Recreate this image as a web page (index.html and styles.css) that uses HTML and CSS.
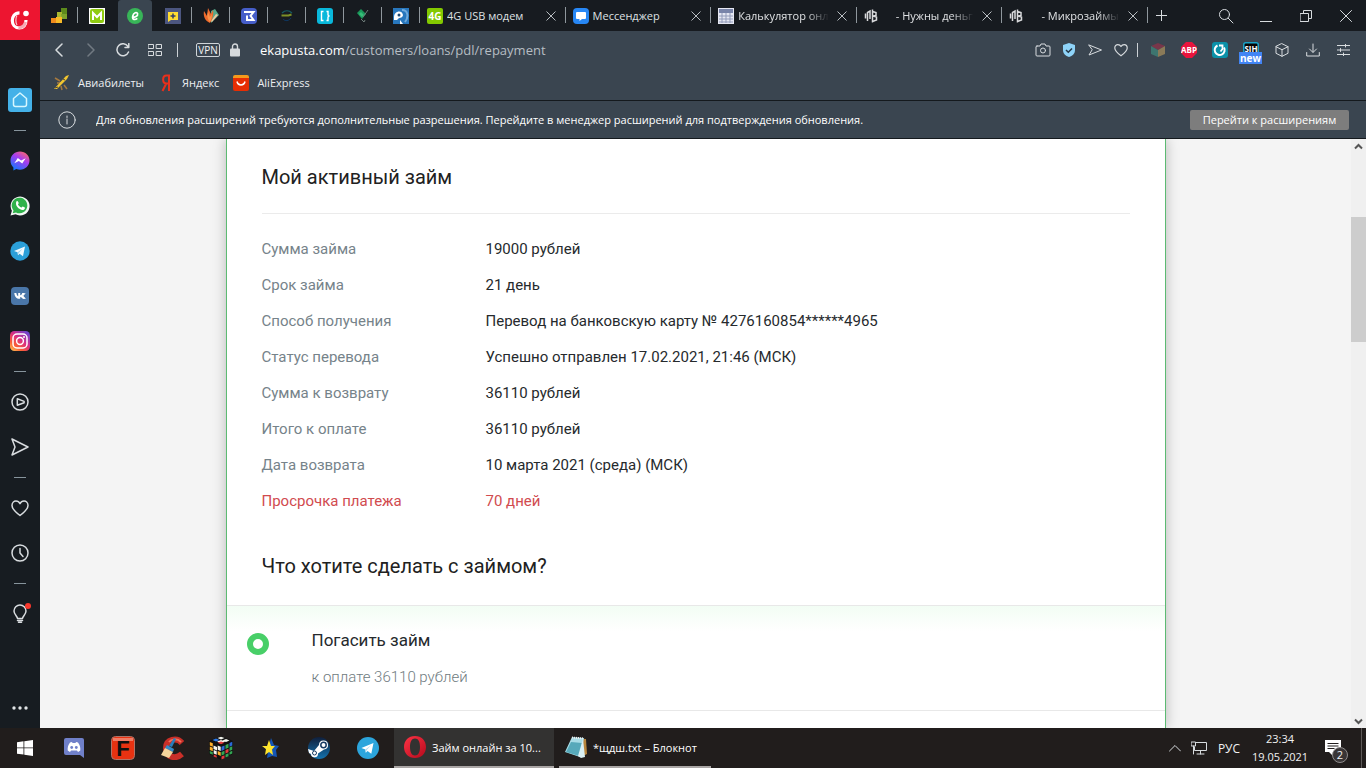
FILE: index.html
```html
<!DOCTYPE html>
<html lang="ru">
<head>
<meta charset="utf-8">
<meta name="viewport" content="width=device-width, initial-scale=1">
<title>Займ онлайн за 10 минут</title>
<link rel="stylesheet" href="styles.css">
</head>
<body>
<div class="desktop">
  <div class="browser">
    <nav class="sidebar" aria-label="Боковая панель">
      <button class="opera-menu" aria-label="Меню"><svg width="22" height="22" viewBox="0 0 22 22" fill="none"><path d="M10.500 3.800C5.500 3.800 3.300 7.500 3.300 11.500s2.600 7.500 7 7.500c4 0 6.700-3 6.700-8" stroke="#fff" stroke-width="3.200"/><path d="M9.500 18.500c3.500.5 6.500-2 7-5.500" stroke="#f6a9b4" stroke-width="3"/><path d="M8 6.500c-1.500 2-1.500 7.500 0 9.500" stroke="#f9ccd2" stroke-width="1.200"/><circle cx="17" cy="4.500" r="2.800" fill="#fff"/></svg></button>
      <div class="side-list">
        <button class="side-item" aria-label="Домой"><span class="home-box"><svg width="24" height="24" viewBox="0 0 24 24" fill="none" stroke="#d6f7ff" stroke-width="1.500" stroke-linejoin="round"><path d="M12 5l6.500 5.500v6a2 2 0 0 1-2 2h-9a2 2 0 0 1-2-2v-6z"/></svg></span></button>
        <span class="dash"></span>
        <button class="side-item" aria-label="Messenger"><svg width="20" height="20" viewBox="0 0 20 20"><defs><linearGradient id="ms" x1=".8" y1="0" x2=".2" y2="1"><stop offset="0" stop-color="#ff6968"/><stop offset=".4" stop-color="#a63cf0"/><stop offset="1" stop-color="#0a7cff"/></linearGradient></defs><path d="M10 .5C4.500.500.500 4.500.500 9.700c0 2.800 1.100 5.100 2.900 6.700v3.100l2.900-1.400c1.100.4 2.400.6 3.700.6 5.500 0 9.500-4 9.500-9.100S15.500.500 10 .5z" fill="url(#ms)"/><path d="M4.300 12.300l3.500-5.400 3.300 2.600 4.600-2.300-3.500 5.300-3.300-2.500z" fill="#fff"/></svg></button>
        <button class="side-item" aria-label="WhatsApp"><svg width="20" height="20" viewBox="0 0 20 20"><path d="M.5 19.500l1.400-4.700A9.500 9.500 0 1 1 5.500 18.300z" fill="#f3f7f4"/><path d="M2.700 17.300l.8-2.800A7.800 7.800 0 1 1 6 16.500z" fill="#2fb24a"/><path d="M6.500 5.300c1.200-1 1.700.4 2.200 1.700.2.600-.9 1.200-.7 1.600.8 1.500 1.800 2.400 3.300 3 .5.100 1-1.300 1.500-1.100l2 1c.7.500-.4 2.200-1.500 2.400-4 .5-9-4.500-6.800-8.600z" fill="#fff"/></svg></button>
        <button class="side-item" aria-label="Telegram"><svg width="20" height="20" viewBox="0 0 20 20"><circle cx="10" cy="10" r="9.700" fill="#2b9fd9"/><path d="M4 10l11-4.600-2 9.800-3.400-2.500-1.600 1.600-.4-3z" fill="#f2faff"/><path d="M7.600 11.300L13 7.200l-4.200 4.700-.8 2.400z" fill="#a9d6ee"/></svg></button>
        <button class="side-item" aria-label="ВКонтакте"><svg width="18" height="18" viewBox="0 0 18 18"><rect width="18" height="18" rx="4" fill="#4a76a8"/><path d="M3.300 6h2c.4 1.700 1 2.900 1.900 3.300V6h2v2.300C10.300 8 11 7 11.500 6h2c-.4 1.200-1.200 2.100-2 2.800 1 .5 1.800 1.500 2.500 3h-2.200c-.5-1-1.300-1.700-2.600-1.900v1.900H8.500C5.500 11.800 3.600 9.700 3.300 6z" fill="#fff"/><path d="M11 6.200h3.700l-2.500 2.700 2.800 2.900H12z" fill="#fff"/></svg></button>
        <button class="side-item" aria-label="Instagram"><svg width="20" height="20" viewBox="0 0 20 20" fill="none"><defs><linearGradient id="ig" x1="0" y1="1" x2=".8" y2="0"><stop offset="0" stop-color="#ffd35a"/><stop offset=".3" stop-color="#fa5e35"/><stop offset=".6" stop-color="#d92e83"/><stop offset="1" stop-color="#6b45d0"/></linearGradient></defs><rect width="20" height="20" rx="4.500" fill="url(#ig)"/><rect x="3" y="3" width="14" height="14" rx="4" stroke="#fff" stroke-width="1.500"/><circle cx="10" cy="10" r="3.400" stroke="#fff" stroke-width="1.500"/><circle cx="14" cy="6" r="1" fill="#fff"/></svg></button>
        <span class="dash"></span>
        <button class="side-item" aria-label="Плеер"><svg width="18" height="18" viewBox="0 0 18 18" class="line"><circle cx="9" cy="9" r="8"/><path d="M6.300 5.800v6.400l6.800-2.500v-1.300z"/></svg></button>
        <button class="side-item" aria-label="Моя лента"><svg width="18" height="18" viewBox="0 0 18 18" class="line"><path d="M1 1l16 8L1 17l3-8z"/></svg></button>
        <span class="dash"></span>
        <button class="side-item" aria-label="Закладки"><svg width="18" height="18" viewBox="0 0 18 18" class="line"><path d="M9 16.500C4 12.700 1 10 1 6.500 1 3.700 2.900 2 5 2c1.800 0 3.200 1 4 2.600C9.800 3 11.200 2 13 2c2.100 0 4 1.700 4 4.500 0 3.500-3 6.200-8 10z"/></svg></button>
        <button class="side-item" aria-label="История"><svg width="18" height="18" viewBox="0 0 18 18" class="line"><circle cx="9" cy="9" r="8"/><path d="M9 4.500V9l3 3.500"/></svg></button>
        <span class="dash"></span>
        <button class="side-item" aria-label="Советы"><svg width="20" height="22" viewBox="0 0 20 22" class="line"><path d="M7.500 15.500c0-2-3.500-4-3.500-7.500a6 6 0 0 1 12 0c0 3.500-3.500 5.500-3.500 7.500zM7.500 17.500h5M8.500 19.300h3"/></svg><span class="dot"></span></button>
      </div>
      <button class="side-more" aria-label="Ещё"><svg width="18" height="6" viewBox="0 0 18 6" fill="#e1e4e6"><circle cx="3" cy="3" r="1.700"/><circle cx="9" cy="3" r="1.700"/><circle cx="15" cy="3" r="1.700"/></svg></button>
    </nav>

    <div class="window">
      <div class="tabbar">
        <div class="pinned">
          <button class="pin" aria-label="Вкладка 1"><svg width="16" height="16" viewBox="0 0 16 16"><path d="M10 0h6v6h-6z" fill="#5c8a1c"/><path d="M6 4h5v6H6z" fill="#a9b82f"/><path d="M10 6h6v5h-5z" fill="#7ba32b"/><path d="M0 10h6v5H0z" fill="#f08b1d"/><path d="M5 9h6v6H5z" fill="#f8ba28"/></svg></button>
          <button class="pin last" aria-label="Вкладка 2"><svg width="16" height="16" viewBox="0 0 16 16"><path d="M0 0h16v16H0z" fill="#fff"/><rect x="1" y="1" width="14" height="14" rx="2" fill="#8fcb10"/><path d="M4 12V5l4 4 4-4v7" fill="none" stroke="#fff" stroke-width="2"/></svg></button>
          <button class="pin active" aria-label="еКапуста"><svg width="16" height="16" viewBox="0 0 16 16"><circle cx="8" cy="8" r="8" fill="#38b558"/><path d="M5 9.200c2.500.3 6.200-1.200 5.600-3.500C10 3.700 6.500 4.500 5.700 8.300c-.6 3.400 2.300 4 4.600 2" fill="none" stroke="#fff" stroke-width="1.700"/></svg></button>
          <button class="pin" aria-label="Вкладка 4"><svg width="16" height="16" viewBox="0 0 16 16"><path d="M0 0h16v16H0z" fill="#4c5680"/><path d="M3 4h10v8H6l-3 2z" fill="#ffdc32"/><path d="M8 5.500v5M5.500 8h5" stroke="#333e67" stroke-width="1.500"/></svg></button>
          <button class="pin" aria-label="Вкладка 5"><svg width="16" height="16" viewBox="0 0 16 16"><path d="M8 3l4-2 4 6-8 8z" fill="#57a98a"/><path d="M8 13l5-7 2 1-6 7z" fill="#f0c79d"/><path d="M7 15C2 13 0 8 1 3l3 5 1-8 3 6 2-4c1 5-1 10-3 13z" fill="#ee6a2c"/><path d="M7 14C4 11 4 7 5 4l2 5 2-3c0 3-1 6-2 8z" fill="#f7924a"/></svg></button>
          <button class="pin" aria-label="Вкладка 6"><svg width="16" height="16" viewBox="0 0 16 16" fill="none"><rect width="16" height="16" rx="4" fill="#465ec9"/><path d="M3 4h9.500L9.500 7.800l3 4.200H6V7.500" stroke="#fff" stroke-width="2"/></svg></button>
          <button class="pin" aria-label="Вкладка 7"><svg width="16" height="16" viewBox="0 0 16 16" fill="none"><path d="M3 5c3-3 7-3 10 0" stroke="#155c64" stroke-width="1.200"/><path d="M2.500 7.500h7l3-1" stroke="#7d9027" stroke-width="2"/><path d="M4 11c2 2.500 6 2 8-1" stroke="#0e3760"/></svg></button>
          <button class="pin" aria-label="Вкладка 8"><svg width="16" height="16" viewBox="0 0 16 16" fill="none"><rect width="16" height="16" rx="3" fill="#09b8db"/><path d="M6.500 3.500h-2v9h2M9.500 3.500h1.500V7l1 1-1 1v3.500H9.500" stroke="#fff" stroke-width="1.400"/></svg></button>
          <button class="pin" aria-label="Вкладка 9"><svg width="16" height="16" viewBox="0 0 16 16"><path d="M2 5l4-4 5 5-4 5z" fill="#1a985a"/><path d="M4 6l2-2 3 3-2 2z" fill="#35bd78"/><path d="M8 9l5-7M6 11l3 3 1-2" fill="none" stroke="#6e7d7a"/></svg></button>
          <button class="pin" aria-label="Вкладка 10"><svg width="16" height="16" viewBox="0 0 16 16"><path d="M0 0h16v16H0z" fill="#2877bd"/><path d="M1 9c0-6 8-8 9-2 0 2-2 3-4 3l-2 2H1zM7 12l3 4H7z" fill="#fff"/><circle cx="6" cy="7" r="1.500" fill="#204b75"/><path d="M9 2c6 0 7 7 3 12" stroke="#6fa9da" stroke-width="2" fill="none"/></svg></button>
        </div>
        <div class="tabs">
          <div class="tab"><svg width="16" height="16" viewBox="0 0 16 16"><rect width="16" height="16" rx="2" fill="#83c900"/><text x="8" y="12" class="glyph-4g" text-anchor="middle">4G</text></svg><button class="tab-title">4G USB модем</button><button class="close" aria-label="Закрыть"><svg width="10" height="10" viewBox="0 0 10 10"><path d="M.5.5l9 9m0-9l-9 9"/></svg></button></div>
          <div class="tab"><svg width="16" height="16" viewBox="0 0 16 16"><rect width="16" height="16" rx="4" fill="#2787f5"/><path d="M4 4h8q1 0 1 1v5q0 1-1 1H9l-2.500 2V11H4q-1 0-1-1V5q0-1 1-1z" fill="#fff"/></svg><button class="tab-title">Мессенджер</button><button class="close" aria-label="Закрыть"><svg width="10" height="10" viewBox="0 0 10 10"><path d="M.5.5l9 9m0-9l-9 9"/></svg></button></div>
          <div class="tab"><svg width="16" height="16" viewBox="0 0 16 16"><path d="M0 0h16v16H0z" fill="#e6e8f3"/><path d="M1 1h14v4H1z" fill="#7984a9"/><path d="M1 8h14M1 11h14M1 14h14M4 5v10M8 5v10M12 5v10" stroke="#929bb9"/></svg><button class="tab-title fade">Калькулятор онл</button><button class="close" aria-label="Закрыть"><svg width="10" height="10" viewBox="0 0 10 10"><path d="M.5.5l9 9m0-9l-9 9"/></svg></button></div>
          <div class="tab"><svg width="16" height="16" viewBox="0 0 16 16" fill="none" stroke="#d9dadc" stroke-width="1.500"><path d="M3.500 13V4.500l2.500-1.500v8M1.500 5.500v5M8.500 1.500v13M8.500 3.500l3.500 1v3l-3 .5 3.500 1v3l-4 1.500"/></svg><button class="tab-title fade indent">- Нужны деньг</button><button class="close" aria-label="Закрыть"><svg width="10" height="10" viewBox="0 0 10 10"><path d="M.5.5l9 9m0-9l-9 9"/></svg></button></div>
          <div class="tab"><svg width="16" height="16" viewBox="0 0 16 16" fill="none" stroke="#d9dadc" stroke-width="1.500"><path d="M3.500 13V4.500l2.500-1.500v8M1.500 5.500v5M8.500 1.500v13M8.500 3.500l3.500 1v3l-3 .5 3.500 1v3l-4 1.500"/></svg><button class="tab-title fade indent">- Микрозаймы</button><button class="close" aria-label="Закрыть"><svg width="10" height="10" viewBox="0 0 10 10"><path d="M.5.5l9 9m0-9l-9 9"/></svg></button></div>
        </div>
        <button class="new-tab" aria-label="Новая вкладка"><svg width="11" height="11" viewBox="0 0 11 11" class="line thin"><path d="M5.500 0v11M0 5.500h11"/></svg></button>
        <div class="win-controls">
          <button aria-label="Поиск"><svg width="16" height="16" viewBox="0 0 16 16" class="line thin"><circle cx="6.500" cy="6.500" r="5"/><path d="M10.200 10.200l4.800 4.800"/></svg></button>
          <button aria-label="Свернуть"><svg width="12" height="14" viewBox="0 0 12 14" class="line thin"><path d="M0 12.500h12"/></svg></button>
          <button aria-label="Восстановить"><svg width="12" height="12" viewBox="0 0 12 12" class="line thin"><path d="M.5 3.500h8v8h-8zM3.500 3.500v-3h8v8h-3"/></svg></button>
          <button aria-label="Закрыть окно"><svg width="12" height="12" viewBox="0 0 12 12" class="line thin"><path d="M.5.5l11 11m0-11l-11 11"/></svg></button>
        </div>
      </div>

      <div class="toolbar">
        <div class="nav-buttons">
          <button aria-label="Назад"><svg width="14" height="14" viewBox="0 0 14 14" class="line"><path d="M10 1L4 7l6 6"/></svg></button>
          <button aria-label="Вперёд" class="dim"><svg width="14" height="14" viewBox="0 0 14 14" class="line"><path d="M4 1l6 6-6 6"/></svg></button>
          <button aria-label="Обновить"><svg width="14" height="14" viewBox="0 0 14 14" class="line"><path d="M12.500 9A6 6 0 1 1 12 3.500M12.800.5V4.500H9"/></svg></button>
          <button aria-label="Экспресс-панель"><svg width="14" height="12" viewBox="0 0 14 12" class="line thin"><path d="M.5.5H5.500v4H.5zM8.500.5h5v4h-5zM.5 7.500h5v4h-5zM8.500 7.500h5v4h-5z"/></svg></button>
        </div>
        <span class="divider"></span>
        <button class="vpn">VPN</button>
        <svg class="lock" width="10" height="14" viewBox="0 0 10 14"><rect y="5.500" width="10" height="8" rx="1" fill="#d5d9dc"/><path d="M2.500 6V3.500a2.500 2.500 0 0 1 5 0V6" fill="none" stroke="#d5d9dc" stroke-width="1.400"/></svg>
        <div class="url" role="textbox" aria-label="Адрес"><b>ekapusta.com</b>/customers/loans/pdl/repayment</div>
        <div class="page-actions">
          <button aria-label="Снимок"><svg width="16" height="14" viewBox="0 0 16 14" class="line thin"><path d="M2 3h3l1-2h4l1 2h3q1 0 1 1v8q0 1-1 1H2q-1 0-1-1V4q0-1 1-1z"/><circle cx="8" cy="7.500" r="2.500"/></svg></button>
          <button aria-label="Защита"><svg width="14" height="14" viewBox="0 0 14 14"><path d="M7 0l6 2v5c0 3.500-2.500 6-6 7-3.500-1-6-3.500-6-7V2z" fill="#8ed3f8"/><path d="M4 7l2.300 2.300L10 5.500" fill="none" stroke="#233848" stroke-width="1.500"/></svg></button>
          <button aria-label="Отправить"><svg width="14" height="14" viewBox="0 0 14 14" class="line thin"><path d="M1 2l12.500 5L1 12l3-5z"/></svg></button>
          <button aria-label="В избранное"><svg width="14" height="14" viewBox="0 0 18 18" class="line"><path d="M9 16.500C4 12.700 1 10 1 6.500 1 3.700 2.900 2 5 2c1.800 0 3.200 1 4 2.600C9.800 3 11.200 2 13 2c2.100 0 4 1.700 4 4.500 0 3.500-3 6.200-8 10z"/></svg></button>
        </div>
        <span class="divider"></span>
        <div class="extensions">
          <button aria-label="Кубик"><svg width="16" height="16" viewBox="0 0 16 16"><path d="M8 1l7 3-7 4-7-4z" fill="#78364a"/><path d="M1 4l7 4v7l-7-3z" fill="#3d756f"/><path d="M15 4v8l-7 3V8z" fill="#8a7a58"/></svg></button>
          <button aria-label="Adblock Plus"><svg width="16" height="16" viewBox="0 0 16 16"><path d="M5 0h6l5 5v6l-5 5H5l-5-5V5z" fill="#e9143d"/><text x="8" y="11" class="glyph-abp" text-anchor="middle">ABP</text></svg></button>
          <button aria-label="Расширение"><svg width="16" height="16" viewBox="0 0 16 16" fill="none"><rect width="16" height="16" rx="3" fill="#0b91a8"/><path d="M5.500 3.500A5 5 0 1 0 12 5.500" stroke="#fff" stroke-width="2"/><path d="M7 3.500h3.500V7L8.500 9.500" stroke="#fff" stroke-width="1.800"/></svg></button>
          <button aria-label="SIH" class="sih"><svg width="16" height="16" viewBox="0 0 16 16"><rect x=".75" y=".75" width="14.500" height="14.500" rx="2" fill="#050505" stroke="#1aa3c8" stroke-width="1.500"/><text x="8" y="10" class="glyph-sih" text-anchor="middle">SIH</text></svg><span class="new-badge">new</span></button>
          <button aria-label="Расширения"><svg width="14" height="14" viewBox="0 0 14 14" class="line thin"><path d="M7 .7l6 3v6.600l-6 3-6-3V3.700zM1 3.700l6 3 6-3M7 6.700v6.600"/></svg></button>
          <button aria-label="Загрузки"><svg width="14" height="14" viewBox="0 0 14 14" class="line thin"><path d="M7 1v8M3.500 6L7 9.500 10.500 6M.7 9.500V13h12.600V9.500"/></svg></button>
          <button aria-label="Настройки"><svg width="13" height="12" viewBox="0 0 13 12" class="line thin"><path d="M0 1.500h13M0 6h13M0 10.500h13M8.500 0v3M3.500 4.500v3M6.500 9v3"/></svg></button>
        </div>
      </div>

      <div class="bookmarks">
        <a href="#avia"><svg width="18" height="18" viewBox="0 0 18 18"><path d="M2 4l5 3M4 9h4M11 11l3 4M8 12l1 4" stroke="#a5793f" stroke-width="1.500"/><path d="M1 15L13 2l3-1-2 4L4 15z" fill="#f2c62f"/><path d="M2 14l3-1M10 5l2 1" stroke="#4b4638"/></svg>Авиабилеты</a>
        <a href="#yandex"><svg width="18" height="18" viewBox="0 0 18 18" fill="none" stroke="#e8301c" stroke-width="2"><path d="M12 17V1.500H9.500c-4.500 0-4.500 8 0 8H12M9.300 9.500L5.500 17"/></svg>Яндекс</a>
        <a href="#aliexpress"><svg width="18" height="18" viewBox="0 0 18 18"><rect x="1" y="1" width="16" height="9" rx="2" fill="#f49a1c"/><path d="M1 4h16v11q0 2-2 2H3q-2 0-2-2z" fill="#e62e04"/><path d="M5 7.500c1 4.500 7 4.500 8 0" fill="none" stroke="#fff" stroke-width="1.500"/></svg>AliExpress</a>
      </div>

      <div class="infobar">
        <svg width="18" height="18" viewBox="0 0 18 18" class="line thin"><circle cx="9" cy="9" r="8.200"/><path d="M9 8v5M9 5v1.500"/></svg>
        <p>Для обновления расширений требуются дополнительные разрешения. Перейдите в менеджер расширений для подтверждения обновления.</p>
        <button class="info-button">Перейти к расширениям</button>
      </div>

      <div class="viewport">
        <main class="page">
          <section class="card">
            <div class="loan">
              <h1>Мой активный займ</h1>
              <table class="details">
                <tr><th scope="row">Сумма займа</th><td>19000 рублей</td></tr>
                <tr><th scope="row">Срок займа</th><td>21 день</td></tr>
                <tr><th scope="row">Способ получения</th><td>Перевод на банковскую карту № 4276160854******4965</td></tr>
                <tr><th scope="row">Статус перевода</th><td>Успешно отправлен 17.02.2021, 21:46 (МСК)</td></tr>
                <tr><th scope="row">Сумма к возврату</th><td>36110 рублей</td></tr>
                <tr><th scope="row">Итого к оплате</th><td>36110 рублей</td></tr>
                <tr><th scope="row">Дата возврата</th><td>10 марта 2021 (среда) (МСК)</td></tr>
                <tr class="overdue"><th scope="row">Просрочка платежа</th><td>70 дней</td></tr>
              </table>
              <h2>Что хотите сделать с займом?</h2>
            </div>
            <label class="option" for="repay">
              <input type="radio" id="repay" name="action" checked>
              <span class="option-text"><span class="option-title">Погасить займ</span><span class="option-note">к оплате 36110 рублей</span></span>
            </label>
          </section>
        </main>
        <div class="scrollbar" aria-hidden="true">
          <svg width="9" height="7" viewBox="0 0 9 7"><path d="M1 5.500l3.500-3.500L8 5.500"/></svg>
          <span class="thumb"></span>
          <svg class="down" width="9" height="7" viewBox="0 0 9 7"><path d="M1 1.500L4.500 5 8 1.500"/></svg>
        </div>
      </div>
    </div>
  </div>

  <footer class="taskbar">
    <button class="launch" aria-label="Пуск"><svg width="16" height="16" viewBox="0 0 16 16" fill="#fff"><path d="M0 2.300l6.500-1v6.200H0zM7.300 1.200L16 0v7.500H7.300zM0 8.300h6.500v6.300L0 13.700zM7.300 8.300H16V16l-8.700-1.200z"/></svg></button>
    <button class="launch" aria-label="Discord"><svg width="20" height="22" viewBox="0 0 20 22"><path d="M2 1h16q2 0 2 2v18l-4-3H2q-2 0-2-2V3q0-2 2-2z" fill="#7080c9"/><path d="M6 5.500l2-.5.5 1h3L12 5l2 .5c2 2.500 2.500 5 2.300 8L14 15l-1-1.500H7L6 15l-2.300-1.500C3.500 10.500 4 8 6 5.500z" fill="#fff"/><circle cx="7.700" cy="10.500" r="1.400" fill="#7080c9"/><circle cx="12.300" cy="10.500" r="1.400" fill="#7080c9"/></svg></button>
    <button class="launch" aria-label="F"><svg width="24" height="24" viewBox="0 0 24 24"><rect x=".5" y=".5" width="23" height="23" rx="4" fill="#e83211" stroke="#ae7468"/><path d="M2 2h20v3H2z" fill="#ef7b64"/><text x="12" y="20" class="glyph-f" text-anchor="middle">F</text></svg></button>
    <button class="launch" aria-label="CCleaner"><svg width="24" height="24" viewBox="0 0 24 24"><path d="M22 7C17 1 6 3 6 12s9 12 16 6" fill="none" stroke="#c92f28" stroke-width="6"/><path d="M21 6c-4-4-10-3-12 0" fill="none" stroke="#f0705c" stroke-width="2"/><path d="M14 2l2 1-4 8-3-1z" fill="#297ebd"/><path d="M7 9l7 4-1 3-8-4z" fill="#348bc9"/><path d="M5 12l8 4-4 6-8-3z" fill="#f4d59c"/></svg></button>
    <button class="launch" aria-label="Кубик Рубика"><svg width="24" height="24" viewBox="0 0 24 24"><path d="M12 0l12 5v13l-12 6L0 18V5z" fill="#111"/><g fill="#f5f5ee"><path d="M12 .7l3.500 1.400L12 3.500 8.500 2.100zM12 4l4 1.600-4 1.600-4-1.600zM17 3l3.500 1.500L17 6l-3.500-1.500zM4.500 9.500L8 11v3.500L4.500 13z"/></g><path d="M7 2.500L10.500 4 7 5.500 3.500 4z" fill="#2b78e8"/><path d="M12 5.500l3.500 1.300L12 8.300 8.500 6.800z" fill="#e43a3d"/><path d="M.8 6l3 1.300v3.500l-3-1.300zM.8 10.500l3 1.300v3.400l-3-1.300zM8.700 15l3 1.300V20l-3-1.400z" fill="#ffb02a"/><path d="M8.700 9.500l3 1.200V15l-3-1.300zM4.700 14l3 1.300v3.500l-3-1.300z" fill="#f5f5ee"/><path d="M12.500 10.700l3-1.300v4.200l-3 1.300zM20.500 7l2.800-1.200v3.700l-2.800 1.300z" fill="#2b68d8"/><path d="M16.500 9l3-1.300v4l-3 1.300zM12.500 16l3-1.300v3.600l-3 1.300zM20.500 11.500l2.800-1.200v3.500L20.500 15zM.8 15l3 1.300v2.500l-3-1.300z" fill="#35a653"/><path d="M16.500 14l3-1.300v3.500l-3 1.300zM4.700 18.500l3 1.300v2l-3-1.300zM12.500 20.500l3-1.300v3l-3 1.300z" fill="#e43a3d"/><path d="M16.500 18.500l3-1.300v3l-3 1.300zM20.500 16l2.800-1.200v2.700l-2.800 1.300z" fill="#35a653"/></svg></button>
    <button class="launch" aria-label="Звезда"><svg width="20" height="22" viewBox="0 0 20 22"><path d="M11 1l3 7 5 1-3 4 1 7-5-1-5 2 1-6-4-5 5-1z" fill="#1556b5"/><path d="M9 3l2 6h4l-3 3.500 1 5.500-4-3-4 3 1-6-4-3h5z" fill="#ffe52e"/></svg></button>
    <button class="launch" aria-label="Steam"><svg width="22" height="22" viewBox="0 0 22 22"><defs><linearGradient id="st" x1="0" y1="0" x2="0" y2="1"><stop offset="0" stop-color="#101f3b"/><stop offset="1" stop-color="#1373af"/></linearGradient></defs><circle cx="11" cy="11" r="11" fill="url(#st)"/><path d="M0 12l6 2 5-6a4.500 4.500 0 1 1 5 4.500l-6 4A3.500 3.500 0 0 1 3 17l-2-1z" fill="#fff"/><circle cx="15.500" cy="8" r="2.700" fill="none" stroke="#173a62" stroke-width="1.500"/><circle cx="6.500" cy="16" r="2" fill="none" stroke="#173a62"/></svg></button>
    <button class="launch" aria-label="Telegram"><svg width="22" height="22" viewBox="0 0 20 20"><circle cx="10" cy="10" r="10" fill="#2ca5dc"/><path d="M4 10l11-4.600-2 9.800-3.400-2.500-1.600 1.600-.4-3z" fill="#fff"/><path d="M7.600 11.300L13 7.200l-4.200 4.700-.8 2.400z" fill="#b2dbf0"/></svg></button>
    <button class="task current"><svg width="22" height="24" viewBox="0 0 22 24"><defs><linearGradient id="op" x1="0" y1="0" x2="1" y2="1"><stop offset="0" stop-color="#ff3345"/><stop offset="1" stop-color="#b40a1c"/></linearGradient></defs><path fill-rule="evenodd" d="M11 1C4.500 1 0 5.500 0 12s4.500 11 11 11 11-4.500 11-11S17.500 1 11 1zm0 2.500c3.300 0 5 3.300 5 8.500s-1.700 8.500-5 8.500S6 17.200 6 12s1.700-8.500 5-8.500z" fill="url(#op)"/></svg><span>Займ онлайн за 10...</span></button>
    <button class="task"><svg width="22" height="24" viewBox="0 0 22 24"><path d="M8 3l13 1 1 15-6 3z" fill="#b7853c"/><path d="M7 2l12 1-4 19L0 17z" fill="#a9dce6"/><path d="M6 7l11 1-3 13L1 17z" fill="#57a9ba"/><path d="M18 4l2 18-4 1-3-2z" fill="#d8eff4"/><path d="M7 2.500l12 1" stroke="#eee" stroke-width="2" stroke-dasharray="1 1"/></svg><span>*щдш.txt – Блокнот</span></button>
    <div class="tray">
      <button aria-label="Скрытые значки"><svg width="12" height="8" viewBox="0 0 12 8" class="line thin"><path d="M.5 7L6 1.500 11.500 7"/></svg></button>
      <button aria-label="Сеть"><svg width="16" height="14" viewBox="0 0 16 14" class="line thin"><path d="M5 1.500h10.500v8H3.500V6M9.500 9.500v3.500M6 13h7M.5 1h4v4h-4zM2.500 5v8"/></svg></button>
      <button class="lang">РУС</button>
      <button class="clock"><span>23:34</span><span>19.05.2021</span></button>
      <button class="notify" aria-label="Уведомления"><svg width="16" height="16" viewBox="0 0 16 16"><path d="M0 0h16v12H8v4l-4-4H0z" fill="#fff"/><path d="M2.500 3.500h11M2.500 6h11M2.500 8.500h7" stroke="#221e1e"/></svg><span class="count">2</span></button>
      <span class="peek"></span>
    </div>
  </footer>
</div>
</body>
</html>
```
FILE: styles.css
```css
* { box-sizing: border-box; }

body {
  margin: 0;
  font-family: "Open Sans", "Noto Sans", sans-serif;
  font-size: 11px;
  color: #f1f2f3;
}

button {
  margin: 0;
  padding: 0;
  border: 0;
  background: none;
  font: inherit;
  color: inherit;
  display: flex;
  align-items: center;
  justify-content: center;
}

svg { flex: none; display: block; }

.line {
  fill: none;
  stroke: #d8dcdf;
  stroke-width: 1.5;
  stroke-linecap: round;
  stroke-linejoin: round;
}
.line.thin { stroke-width: 1; }

.desktop {
  height: 100vh;
  display: flex;
  flex-direction: column;
  overflow: hidden;
}
.browser { flex: 1; min-height: 0; display: flex; }

/* Sidebar */
.sidebar {
  flex: none;
  width: 40px;
  background: #171c21;
  display: flex;
  flex-direction: column;
  justify-content: space-between;
}
.opera-menu { height: 40px; background: #ed1530; flex: none; }
.side-list {
  flex: 1;
  min-height: 0;
  padding-top: 37px;
  display: flex;
  flex-direction: column;
  align-items: stretch;
}
.side-item { height: 45px; position: relative; flex: none; }
.home-box { background: #44b1e8; border-radius: 3px; }
.dash {
  flex: none;
  height: 16px;
  display: flex;
  align-items: center;
  justify-content: center;
}
.dash::before { content: ""; width: 12px; height: 1px; background: #87949c; }
.dot {
  position: absolute;
  top: 12px;
  right: 9px;
  width: 6px;
  height: 6px;
  border-radius: 50%;
  background: #f8382d;
}
.side-more { height: 40px; flex: none; }

/* Browser window */
.window { flex: 1; min-width: 0; display: flex; flex-direction: column; background: #3a4550; }

.tabbar {
  flex: none;
  height: 31px;
  display: flex;
  background: #171b20;
}
.pinned { display: flex; flex: none; }
.pin { width: 38px; position: relative; }
.pin:not(.last):not(.active)::after,
.tab::after {
  content: "";
  position: absolute;
  right: 0;
  top: 7px;
  width: 1px;
  height: 16px;
  background: #8f979d;
}
.pin.active { width: 34px; margin: 0 2px; background: #3a4550; border-radius: 3px 3px 0 0; }
.tabs {
  flex: 0 1 728px;
  min-width: 0;
  display: grid;
  grid-template-columns: repeat(5, 1fr);
}
.tab {
  position: relative;
  min-width: 0;
  padding: 0 10px 0 7px;
  display: flex;
  align-items: center;
  gap: 4px;
}
.tab-title {
  flex: 1;
  min-width: 0;
  overflow: hidden;
  white-space: nowrap;
  justify-content: flex-start;
  color: #dfe1e3;
}
.fade { -webkit-mask-image: linear-gradient(90deg, #000 75%, transparent); mask-image: linear-gradient(90deg, #000 75%, transparent); }
.indent { padding-left: 12px; }
.close { margin-left: 4px; stroke: #b9bec2; }
.new-tab { width: 26px; }
.win-controls { margin-left: auto; display: flex; }
.win-controls button { width: 40px; }

.toolbar {
  flex: none;
  height: 38px;
  padding: 0 7px 0 3px;
  display: flex;
  align-items: center;
}
.nav-buttons { display: flex; }
.nav-buttons button { width: 32px; height: 32px; }
.dim { opacity: 0.35; }
.divider { flex: none; width: 1px; height: 14px; background: #ccd1d5; margin: 0 3px; }
.nav-buttons + .divider { margin: 0 18px 0 6px; }
.vpn {
  flex: none;
  width: 24px;
  height: 14px;
  border: 1px solid #cfd4d8;
  border-radius: 2px;
  font-size: 10px;
}
.lock { margin: 0 20px 0 10px; }
.url { flex: 1; min-width: 0; overflow: hidden; white-space: nowrap; font-size: 13px; color: #b6bdc3; }
.url b { font-weight: 400; color: #fff; }
.page-actions, .extensions { display: flex; flex: none; }
.page-actions button { width: 26px; height: 26px; }
.extensions { padding-left: 1px; }
.extensions button { width: 31px; height: 26px; }
.sih { position: relative; }
.new-badge {
  position: absolute;
  left: 4px;
  top: 15px;
  width: 23px;
  height: 12px;
  line-height: 12px;
  background: #4285f4;
  color: #fff;
  font-size: 10px;
  font-weight: 700;
}
.glyph-4g { font: 700 10px "Open Sans", sans-serif; fill: #fff; }
.glyph-abp { font: 700 8px "Open Sans", sans-serif; fill: #fff; }
.glyph-sih { font: 700 8px "Open Sans", sans-serif; fill: #fff; }
.glyph-f { font: 700 22px "Liberation Sans", sans-serif; fill: #111; }

.bookmarks {
  flex: none;
  height: 31px;
  padding: 0 13px 4px;
  display: flex;
  align-items: center;
  gap: 13px;
}
.bookmarks a { display: flex; align-items: center; gap: 7px; color: #eceef0; text-decoration: none; }

.infobar {
  flex: none;
  height: 39px;
  padding: 0 17px 0 18px;
  display: flex;
  align-items: center;
  gap: 20px;
  border-top: 1px solid #14191d;
  border-bottom: 1px solid #14191d;
}
.infobar p { margin: 0; flex: 1; min-width: 0; white-space: nowrap; overflow: hidden; color: #fff; }
.info-button {
  flex: none;
  width: 159px;
  height: 20px;
  border-radius: 2px;
  background: #7d7d7d;
  color: #fff;
}

/* Page */
.viewport { flex: 1; min-height: 0; display: flex; background: #f4f4f4; }
.page { flex: 1; min-width: 0; overflow: hidden; display: flex; justify-content: center; }
.card {
  width: 100%;
  max-width: 940px;
  min-height: 100%;
  background: #fff;
  border: solid #5cba72;
  border-width: 0 1px;
  box-shadow: 0 0 12px rgba(0, 0, 0, 0.25);
  font-family: Roboto, sans-serif;
  color: #262a2d;
}
.loan { padding: 0 35px; }
h1, h2 { margin: 0; font-size: 20px; font-weight: 400; line-height: 24px; color: #212121; }
h1 { padding: 26px 0 24px; border-bottom: 1px solid #ebebeb; }
h2 { padding: 35px 0 27px; }
.details { width: 100%; margin-top: 17px; border-collapse: collapse; font-size: 15px; }
.details th, .details td { height: 36px; padding: 0; text-align: left; font-weight: 400; }
.details th { width: 224px; color: #76838a; }
.details .overdue th, .details .overdue td { color: #d14b4f; }

.option {
  height: 106px;
  padding: 23px 20px 0;
  display: flex;
  align-items: flex-start;
  gap: 43px;
  border: solid #e8e8e8;
  border-width: 1px 0;
  background: linear-gradient(#f2fdf4, #fff 26px);
}
.option input {
  appearance: none;
  flex: none;
  width: 22px;
  height: 22px;
  margin: 4px 0 0;
  border: 6px solid #48cf68;
  border-radius: 50%;
  background: #fff;
}
.option-text { display: flex; flex-direction: column; gap: 15px; }
.option-title { font-size: 17px; line-height: 22px; }
.option-note { font-size: 15px; font-weight: 300; line-height: 22px; color: #6f7b80; }

.scrollbar {
  flex: none;
  width: 15px;
  padding: 4px 0 3px;
  background: #f0f0f0;
  display: flex;
  flex-direction: column;
  align-items: center;
}
.scrollbar path { fill: none; stroke: #555; stroke-width: 2; }
.thumb { width: 15px; height: 125px; margin-top: 67px; background: #cdcdcd; }
.down { margin-top: auto; }

/* Taskbar */
.taskbar {
  flex: none;
  height: 40px;
  display: flex;
  align-items: stretch;
  background: #211d1c;
}
.launch { width: 49px; flex: none; }
.task {
  flex: 0 1 160px;
  min-width: 0;
  padding: 0 10px;
  gap: 6px;
  justify-content: flex-start;
  border-bottom: 2px solid #aaa6a5;
  white-space: nowrap;
  color: #fff;
}
.task + .task { flex-basis: 152px; margin-left: 5px; padding: 0 6px; }
.task.current { background: #333231; margin-left: 2px; }
.tray { margin-left: auto; display: flex; align-items: stretch; }
.tray button { width: 24px; }
.tray .lang { width: 36px; font-size: 12px; }
.tray .clock { width: 66px; flex-direction: column; line-height: 18px; }
.tray .notify { width: 40px; position: relative; }
.count {
  position: absolute;
  left: 19px;
  top: 19px;
  width: 16px;
  height: 16px;
  line-height: 14px;
  border: 1px solid #8f8c8c;
  border-radius: 50%;
  background: #393536;
  font-size: 11px;
  text-align: center;
}
.peek { width: 5px; margin-left: 8px; border-left: 1px solid #5d5958; }
```
